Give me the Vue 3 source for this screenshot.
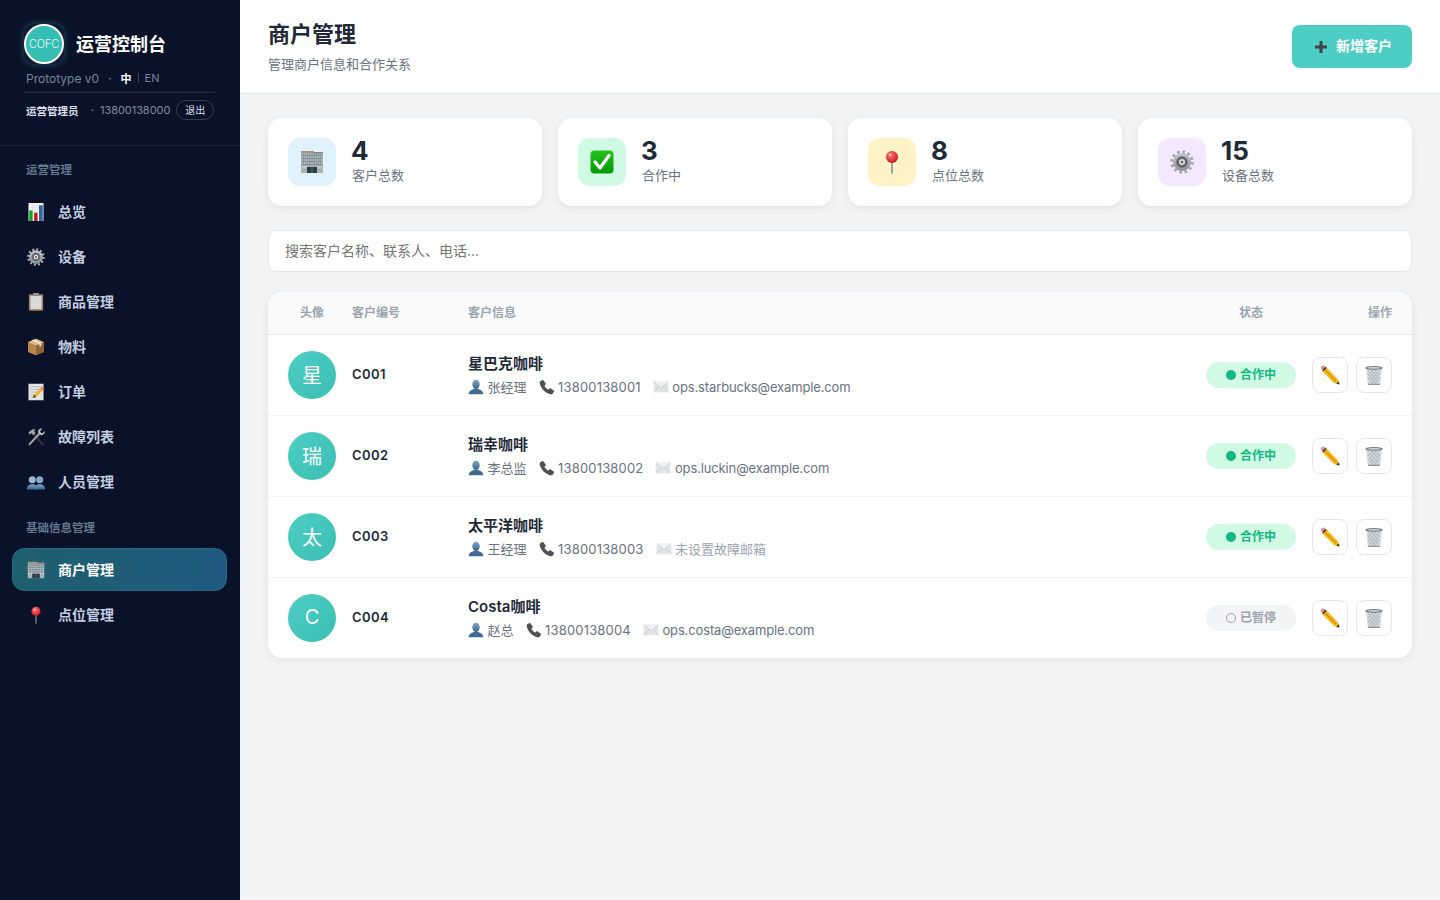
<template>
  <div class="layout">
    <!-- 图标雪碧图 -->
    <svg class="sprite" width="0" height="0" aria-hidden="true">
      <defs>
        <linearGradient id="g-steel" x1="0" y1="0" x2="0" y2="1"><stop offset="0" stop-color="#c4c8cc" /><stop offset="1" stop-color="#8d9196" /></linearGradient>
        <linearGradient id="g-green" x1="0" y1="0" x2="0" y2="1"><stop offset="0" stop-color="#27c21d" /><stop offset="1" stop-color="#049804" /></linearGradient>
        <radialGradient id="g-red" cx="0.4" cy="0.35" r="0.7"><stop offset="0" stop-color="#ff7a7a" /><stop offset="1" stop-color="#c8101c" /></radialGradient>
        <linearGradient id="g-blue" x1="0" y1="0" x2="0" y2="1"><stop offset="0" stop-color="#7fa6c8" /><stop offset="1" stop-color="#39628c" /></linearGradient>
        <linearGradient id="g-box" x1="0" y1="0" x2="0" y2="1"><stop offset="0" stop-color="#d9a873" /><stop offset="1" stop-color="#8f6238" /></linearGradient>
      </defs>
      <symbol id="i-building" viewBox="0 0 24 24">
        <path d="M1 3h22v20H1z" fill="#a9b4b9" />
        <path d="M1 1h13v2.500H1z" fill="#a49484" />
        <path d="M14 2h9v1.500h-9z" fill="#8f8377" />
        <path d="M2.500 5.500h19M2.500 8.500h19M2.500 11.500h19M2.500 14.500h19" stroke="#6f828c" stroke-width="1.400" stroke-dasharray="1.500 .7" />
        <path d="M7 17h10v6H7z" fill="#2b3b44" />
        <path d="M2 17h5M17 17h5" stroke="#c8cdd0" stroke-width="1.500" />
        <path d="M12 17v6" stroke="#6c7a82" stroke-width=".8" />
      </symbol>
      <symbol id="i-check" viewBox="0 0 24 24">
        <rect x="0.500" y="0.500" width="23" height="23" rx="4" fill="url(#g-green)" />
        <path d="M5 12l5 6L19 5.500" fill="none" stroke="#fff" stroke-width="3.200" stroke-linecap="round" stroke-linejoin="round" />
      </symbol>
      <symbol id="i-pin" viewBox="0 0 24 24">
        <path d="M12 9v14" stroke="#8b8f93" stroke-width="1.600" stroke-linecap="round" />
        <circle cx="12" cy="7" r="6" fill="url(#g-red)" />
        <circle cx="10" cy="4.800" r="1.300" fill="#ffc4c4" />
      </symbol>
      <symbol id="i-gear" viewBox="0 0 24 24">
        <circle cx="12" cy="12" r="10" fill="none" stroke="#a5a9ad" stroke-width="3.500" stroke-dasharray="2.600 2.636" />
        <circle cx="12" cy="12" r="9" fill="url(#g-steel)" />
        <circle cx="12" cy="12" r="5.800" fill="#62666b" />
        <circle cx="12" cy="12" r="3" fill="#dfe1e3" />
        <circle cx="12" cy="12" r="1.300" fill="#55595e" />
      </symbol>
      <symbol id="i-chart" viewBox="0 0 24 24">
        <path d="M2 0h20v24H2z" fill="#f1f3f5" />
        <path d="M2 6h20M2 12h20M2 18h20M8 0v24M14 0v24" stroke="#d1d6db" stroke-width=".5" />
        <path d="M3 10h4.500v14H3z" fill="#0ca81f" />
        <path d="M9.500 13h4.500v11H9.500z" fill="#c81518" />
        <path d="M16 3h5v21h-5z" fill="#2f66a8" />
      </symbol>
      <symbol id="i-clipboard" viewBox="0 0 24 24">
        <rect x="2.500" y="1.500" width="19" height="22" rx="1.500" fill="#a18263" />
        <rect x="4.500" y="4" width="15" height="17.500" fill="#d9d9d9" />
        <rect x="8" y="0" width="8" height="3.500" rx="1" fill="#8e9397" />
      </symbol>
      <symbol id="i-box" viewBox="0 0 24 24">
        <path d="M12 1l10.500 4.500v13L12 23 1.500 18.500v-13z" fill="url(#g-box)" />
        <path d="M12 10v13L1.500 18.500v-13z" fill="#b78550" />
        <path d="M12 10v13l10.500-4.500v-13z" fill="#8f6439" />
        <path d="M1.500 5.500L12 1l10.500 4.500L12 10z" fill="#deb68a" />
        <path d="M6 3.300l10.500 4.500v4l2.500-1V6.700L8.700 2.100z" fill="#f2e3cf" />
      </symbol>
      <symbol id="i-memo" viewBox="0 0 24 24">
        <rect x="2" y="1" width="20" height="22" fill="#e4e6e8" />
        <path d="M4.500 5h15M4.500 8.500h15M4.500 12h10M4.500 15.500h6M4.500 19h5" stroke="#a9adb2" stroke-width="1" />
        <path d="M8 20l1.200-4.500L18 6.500l3.200 3.200-9 8.800z" fill="#f0b429" />
        <path d="M18 6.500l1.700-1.700 3.200 3.200-1.700 1.700z" fill="#e66f7b" />
        <path d="M8 20l1.200-4.500 3 3z" fill="#3c3c3c" />
      </symbol>
      <symbol id="i-tools" viewBox="0 0 24 24">
        <path d="M7 6l14 16" stroke="#3a332d" stroke-width="2.800" stroke-linecap="round" />
        <path d="M2 5.500L7.500 1.500h4L9.500 4l1.800 2.500-3 3L6 6.800 3.500 9z" fill="#9fa4a9" />
        <path d="M17 7L3.500 21.500" stroke="#9fa4a9" stroke-width="2.800" stroke-linecap="round" />
        <path d="M14.500 5.500a4.500 4.500 0 0 1 6-4.500l-3 3 .7 2.300 2.300.7 3-3a4.500 4.500 0 0 1-6.500 5z" fill="#b5b9bd" />
      </symbol>
      <symbol id="i-people" viewBox="0 0 24 24">
        <circle cx="7" cy="9" r="4.700" fill="#9cb6d2" />
        <path d="M0 22c0-5 2.500-7 7-7s7 2 7 7z" fill="url(#g-blue)" />
        <circle cx="17" cy="9" r="4.700" fill="#88a6c6" />
        <path d="M10 22c0-5 2.500-7 7-7s7 2 7 7z" fill="url(#g-blue)" />
      </symbol>
      <symbol id="i-person" viewBox="0 0 24 24">
        <ellipse cx="12" cy="8" rx="5.500" ry="7" fill="url(#g-blue)" />
        <path d="M1 23c0-5 4-6.500 7.500-8h7c3.500 1.500 7.500 3 7.500 8z" fill="#3f6b95" />
      </symbol>
      <symbol id="i-phone" viewBox="0 0 24 24">
        <path d="M2 3.500L6 1l4.500 6.500-2.300 2.500c1 2.500 3.300 4.800 5.800 5.800l2.500-2.300L23 18l-2.500 4c-1 1.300-3 1.300-5 .4C8.500 19.500 4.500 15.500 1.600 8.500.8 6.500.8 4.500 2 3.500z" fill="#4d5156" />
      </symbol>
      <symbol id="i-mail" viewBox="0 0 24 24">
        <rect x="1" y="4" width="22" height="16" fill="#e3e4e6" />
        <path d="M1 4l11 9 11-9" fill="#f0f1f2" stroke="#c5c7ca" stroke-width="1" />
        <path d="M1 20l8-9M23 20l-8-9" stroke="#c5c7ca" stroke-width="1" />
      </symbol>
      <symbol id="i-pencil" viewBox="0 0 24 24">
        <path d="M7.500 2.500L2.500 7.500 17 22l6 1.500L21.500 17z" fill="#f7bd1f" />
        <path d="M5 5l14.500 14.500" stroke="#d68f0c" stroke-width="1.600" />
        <path d="M3.200 0.800a2.800 2.800 0 0 0-2.400 2.400c0 .8.300 1.300.7 1.800l1 1 4-4-1-1a2.800 2.800 0 0 0-2.300-.2z" fill="#ee8f98" />
        <path d="M2.500 6l4-4 1.500 1.500-4 4z" fill="#3e3e42" />
        <path d="M19.500 22.500L23.500 23.500l-1-4z" fill="#333" />
      </symbol>
      <symbol id="i-trash" viewBox="0 0 24 24">
        <path d="M2.500 3.500h19L19.500 23.500h-15z" fill="#d8dbdf" />
        <path d="M5 6l13 15M9 6l10 11M13 6l6 6M4.500 10l10 12M5 15l6 7M19 6L6 21M15 6L5 17M11 6l-6 6M19.500 10l-10 12M19 15l-6 7" stroke="#9aa0a6" stroke-width=".7" />
        <ellipse cx="12" cy="3.500" rx="10" ry="1.500" fill="#e5e7ea" stroke="#5f6770" stroke-width="1.200" />
        <path d="M5 23h14" stroke="#6f767e" stroke-width="1.300" />
      </symbol>
    </svg>

    <aside class="sidebar">
      <div class="brand">
        <div class="brand-row">
          <div class="logo-box"><div class="logo"><span>COFC</span></div></div>
          <div class="brand-title">运营控制台</div>
        </div>
        <div class="brand-meta">
          <span>Prototype v0</span>
          <span class="meta-dot">·</span>
          <span class="lang-on">中</span>
          <span class="lang-sep"></span>
          <span class="lang-off">EN</span>
        </div>
        <div class="user-row">
          <span class="user-name">运营管理员</span>
          <span class="user-dot">·</span>
          <span class="user-phone">13800138000</span>
          <button class="logout">退出</button>
        </div>
      </div>

      <nav class="nav">
        <template v-for="group in navGroups" :key="group.title">
          <div class="nav-title">{{ group.title }}</div>
          <a v-for="item in group.items" :key="item.label" class="nav-item" :class="{ 'is-active': item.active }">
            <svg class="nav-icon"><use :href="'#i-' + item.icon" /></svg>
            <span>{{ item.label }}</span>
          </a>
        </template>
      </nav>
    </aside>

    <main class="main">
      <header class="page-head">
        <div>
          <h1>商户管理</h1>
          <p>管理商户信息和合作关系</p>
        </div>
        <button class="add-btn">
          <svg class="plus" viewBox="0 0 14 14"><path d="M7 1v12M1 7h12" stroke="#3f4347" stroke-width="3" /></svg>
          <span>新增客户</span>
        </button>
      </header>

      <div class="content">
        <section class="stats">
          <div v-for="s in stats" :key="s.label" class="stat-card">
            <div class="stat-icon" :class="s.tone"><svg><use :href="'#i-' + s.icon" /></svg></div>
            <div class="stat-text">
              <div class="stat-num">{{ s.value }}</div>
              <div class="stat-label">{{ s.label }}</div>
            </div>
          </div>
        </section>

        <input class="search" type="text" placeholder="搜索客户名称、联系人、电话..." />

        <section class="table">
          <div class="row table-head">
            <div class="center">头像</div>
            <div>客户编号</div>
            <div>客户信息</div>
            <div class="center">状态</div>
            <div class="right">操作</div>
          </div>
          <div v-for="c in customers" :key="c.code" class="row table-row">
            <div class="avatar">{{ c.avatar }}</div>
            <div class="code">{{ c.code }}</div>
            <div>
              <div class="name">{{ c.name }}</div>
              <div class="meta">
                <span class="meta-item"><svg><use href="#i-person" /></svg>{{ c.contact }}</span>
                <span class="meta-item phone"><svg><use href="#i-phone" /></svg>{{ c.phone }}</span>
                <span class="meta-item email" :class="{ 'is-empty': !c.email }"><svg><use href="#i-mail" /></svg>{{ c.email || '未设置故障邮箱' }}</span>
              </div>
            </div>
            <div class="center">
              <span class="chip" :class="{ 'is-paused': c.paused }"><i class="chip-dot"></i><b>{{ c.paused ? '已暂停' : '合作中' }}</b></span>
            </div>
            <div class="actions">
              <button class="icon-btn"><svg><use href="#i-pencil" /></svg></button>
              <button class="icon-btn"><svg><use href="#i-trash" /></svg></button>
            </div>
          </div>
        </section>
      </div>
    </main>
  </div>
</template>

<script setup>
const navGroups = [
  {
    title: '运营管理',
    items: [
      { label: '总览', icon: 'chart' },
      { label: '设备', icon: 'gear' },
      { label: '商品管理', icon: 'clipboard' },
      { label: '物料', icon: 'box' },
      { label: '订单', icon: 'memo' },
      { label: '故障列表', icon: 'tools' },
      { label: '人员管理', icon: 'people' }
    ]
  },
  {
    title: '基础信息管理',
    items: [
      { label: '商户管理', icon: 'building', active: true },
      { label: '点位管理', icon: 'pin' }
    ]
  }
];

const stats = [
  { value: 4, label: '客户总数', icon: 'building', tone: 'blue' },
  { value: 3, label: '合作中', icon: 'check', tone: 'green' },
  { value: 8, label: '点位总数', icon: 'pin', tone: 'yellow' },
  { value: 15, label: '设备总数', icon: 'gear', tone: 'purple' }
];

const customers = [
  { avatar: '星', code: 'C001', name: '星巴克咖啡', contact: '张经理', phone: '13800138001', email: 'ops.starbucks@example.com' },
  { avatar: '瑞', code: 'C002', name: '瑞幸咖啡', contact: '李总监', phone: '13800138002', email: 'ops.luckin@example.com' },
  { avatar: '太', code: 'C003', name: '太平洋咖啡', contact: '王经理', phone: '13800138003', email: '' },
  { avatar: 'C', code: 'C004', name: 'Costa咖啡', contact: '赵总', phone: '13800138004', email: 'ops.costa@example.com', paused: true }
];
</script>

<style>
body {
  background: #f3f4f6;
}
</style>

<style scoped>
.layout {
  display: flex;
  min-height: 100vh;
  font-family: Inter, "Noto Sans CJK SC", sans-serif;
  color: #1f2937;
}

.sprite {
  position: absolute;
}

/* 侧边栏 */
.sidebar {
  width: 240px;
  flex-shrink: 0;
  background: #0a1229;
}

.brand {
  padding: 24px 26px 24px 24px;
  height: 146px;
  box-sizing: border-box;
  border-bottom: 1px solid #1c2438;
}

.brand-row {
  display: flex;
  align-items: center;
  gap: 12px;
}

.logo-box {
  width: 40px;
  height: 40px;
  border-radius: 10px;
  background: #101a33;
  box-shadow: 0 0 6px rgba(78, 205, 196, 0.35);
}

.logo {
  width: 40px;
  height: 40px;
  box-sizing: border-box;
  border-radius: 50%;
  background: #36bdb4;
  border: 2px solid #fff;
  display: flex;
  align-items: center;
  justify-content: center;
  color: #e8fbf9;
  font-size: 11px;
  font-weight: 300;
  letter-spacing: -0.2px;
}

.brand-title {
  font-size: 18px;
  line-height: 24px;
  padding-top: 2px;
  font-weight: 700;
  color: #fff;
}

.brand-meta {
  display: flex;
  align-items: center;
  height: 20px;
  margin: 4px 0 0 2px;
  padding-bottom: 4px;
  font-size: 12px;
  color: #76849b;
}

.meta-dot {
  margin: 0 9px;
}

.lang-on {
  color: #fff;
  font-size: 11px;
  font-weight: 700;
}

.lang-sep {
  width: 1px;
  height: 10px;
  margin: 0 6px;
  background: #3b465c;
}

.lang-off {
  font-size: 11px;
}

.user-row {
  display: flex;
  align-items: center;
  width: 191px;
  padding: 7px 0 0 2px;
  border-top: 1px solid #262e43;
  font-size: 11px;
  box-sizing: border-box;
}

.user-name {
  width: 65px;
  color: #d7deea;
  font-size: 10.5px;
  font-weight: 600;
}

.user-dot {
  width: 9px;
  color: #7f8da4;
}

.user-phone {
  color: #7f8da4;
  white-space: nowrap;
  letter-spacing: -0.05px;
}

.logout {
  margin-left: 6px;
  width: 38px;
  height: 20px;
  padding: 0 0 1px;
  background: transparent;
  border: 1px solid #333d53;
  border-radius: 10px;
  color: #d7deea;
  font-size: 10px;
  font-family: inherit;
}

.nav {
  padding: 17px 12px;
}

.nav-title {
  height: 17px;
  line-height: 15px;
  margin: 0 0 10px 14px;
  font-size: 11.5px;
  font-weight: 700;
  color: #64778f;
}

.nav-item + .nav-title {
  margin-top: 18px;
}

.nav-item {
  display: flex;
  align-items: center;
  gap: 12px;
  height: 43px;
  box-sizing: border-box;
  margin-bottom: 2px;
  padding: 0 14px;
  border: 1px solid transparent;
  border-radius: 12px;
  font-size: 14px;
  font-weight: 600;
  color: #c1cde0;
  width: 215px;
}

.nav-item span {
  margin-bottom: 2px;
}

.nav-item.is-active {
  color: #fff;
  background: linear-gradient(100deg, #1f5f6e, #1f5a80);
  border-color: #24697f;
}

.nav-icon {
  width: 20px;
  height: 18px;
  margin-left: -1px;
  flex-shrink: 0;
}

/* 主体 */
.main {
  flex: 1;
  min-width: 0;
}

.page-head {
  display: flex;
  justify-content: space-between;
  align-items: center;
  height: 94px;
  box-sizing: border-box;
  padding: 0 28px 2px;
  background: #fff;
  border-bottom: 1px solid #e5e7eb;
}

.page-head h1 {
  margin: 0 0 6px;
  font-size: 22px;
  line-height: 30px;
  font-weight: 700;
  color: #1f2937;
}

.page-head p {
  margin: 0;
  font-size: 13px;
  line-height: 18px;
  color: #6b7280;
}

.add-btn {
  display: flex;
  align-items: center;
  justify-content: center;
  gap: 8px;
  width: 120px;
  height: 43px;
  margin-top: 2px;
  padding: 0 0 0 2px;
  border: none;
  border-radius: 8px;
  background: #4ecdc4;
  color: #fff;
  font-family: inherit;
  font-size: 14px;
  font-weight: 600;
}

.add-btn span {
  margin-bottom: 3px;
}

.plus {
  width: 14px;
  height: 14px;
}

.content {
  padding: 24px 28px;
}

.stats {
  display: grid;
  grid-template-columns: repeat(4, 1fr);
  gap: 16px;
  margin-bottom: 24px;
}

.stat-card {
  display: flex;
  align-items: center;
  gap: 16px;
  height: 88px;
  box-sizing: border-box;
  padding: 0 20px;
  background: #fff;
  border-radius: 14px;
  box-shadow: 0 2px 8px rgba(0, 0, 0, 0.08);
}

.stat-icon {
  width: 48px;
  height: 48px;
  border-radius: 12px;
  display: flex;
  align-items: center;
  justify-content: center;
}

.stat-icon svg {
  width: 24px;
  height: 24px;
}

.stat-icon.blue { background: #e0f2fe; }
.stat-icon.green { background: #d1fae5; }
.stat-icon.yellow { background: #fef3c7; }
.stat-icon.purple { background: #f3e8ff; }

.stat-text {
  padding-bottom: 2px;
}

.stat-num {
  margin-left: -1px;
  font-size: 26px;
  line-height: 26px;
  font-weight: 700;
  color: #1f2937;
}

.stat-label {
  font-size: 13px;
  line-height: 18px;
  margin-top: 2px;
  color: #6b7280;
}

.search {
  display: block;
  width: 100%;
  height: 42px;
  box-sizing: border-box;
  padding: 0 16px 2px;
  margin-bottom: 20px;
  background: #fff;
  border: 1px solid #e5e7eb;
  border-radius: 8px;
  font-family: inherit;
  font-size: 14px;
  outline: none;
}

.search::placeholder {
  color: #757575;
}

/* 表格 */
.table {
  background: #fff;
  border-radius: 14px;
  overflow: hidden;
  box-shadow: 0 2px 8px rgba(0, 0, 0, 0.08);
}

.row {
  display: grid;
  grid-template-columns: 48px 100px 1fr 90px 80px;
  column-gap: 16px;
  align-items: center;
  padding: 0 20px;
}

.table-head {
  height: 43px;
  box-sizing: border-box;
  padding-bottom: 3px;
  background: #fafafa;
  border-bottom: 1px solid #e5e7eb;
  font-size: 12px;
  font-weight: 600;
  color: #9ca3af;
}

.center {
  text-align: center;
}

.right {
  text-align: right;
}

.table-row {
  height: 81px;
  box-sizing: border-box;
  border-bottom: 1px solid #f3f4f6;
}

.table-row:last-child {
  height: 80px;
  border-bottom: none;
}

.avatar {
  width: 48px;
  height: 48px;
  box-sizing: border-box;
  padding-bottom: 2px;
  border-radius: 50%;
  background: linear-gradient(135deg, #4ecdc4, #3bbfb3);
  color: #fff;
  font-size: 20px;
  display: flex;
  align-items: center;
  justify-content: center;
}

.code {
  font-size: 13px;
  font-weight: 600;
  letter-spacing: 0.4px;
  padding-bottom: 2px;
}

.name {
  font-size: 15px;
  line-height: 20px;
  font-weight: 600;
  color: #1f2937;
  margin-bottom: 3px;
}

.meta {
  display: flex;
  gap: 12px;
  font-size: 13px;
  line-height: 20px;
  color: #6b7280;
}

.meta-item {
  display: flex;
  align-items: center;
  gap: 3.5px;
}

.meta-item svg {
  width: 16px;
  height: 16px;
}

.phone {
  letter-spacing: 0.18px;
}

.email {
  letter-spacing: -0.14px;
}

.email.is-empty {
  color: #9ca3af;
  letter-spacing: 0;
}

.chip {
  display: inline-flex;
  align-items: center;
  justify-content: center;
  gap: 4px;
  width: 90px;
  height: 26px;
  border-radius: 13px;
  background: #d1fae5;
  color: #10b981;
  font-size: 12px;
}

.chip b {
  font-weight: 600;
  margin-top: -3px;
}

.chip-dot {
  width: 10px;
  height: 10px;
  box-sizing: border-box;
  border-radius: 50%;
  background: #10b981;
}

.chip.is-paused {
  background: #f3f4f6;
  color: #9ca3af;
}

.chip.is-paused .chip-dot {
  background: transparent;
  border: 1.5px solid #9ca3af;
}

.actions {
  display: flex;
  justify-content: flex-end;
  gap: 8px;
}

.icon-btn {
  width: 36px;
  height: 36px;
  padding: 0;
  display: flex;
  align-items: center;
  justify-content: center;
  background: #fff;
  border: 1px solid #e5e7eb;
  border-radius: 8px;
}

.icon-btn svg {
  width: 20px;
  height: 20px;
}
</style>
